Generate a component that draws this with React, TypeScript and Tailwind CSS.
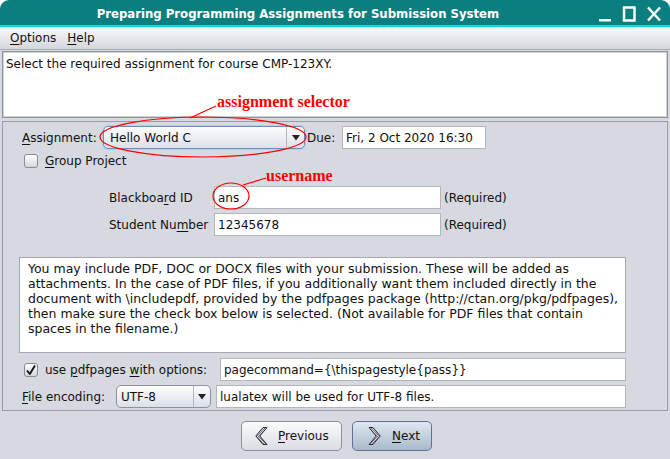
import React from "react";

const U = ({ children }: { children: React.ReactNode }) => (
  <span className="underline underline-offset-[2px] decoration-[1px]">{children}</span>
);

const Check = ({ checked }: { checked?: boolean }) => (
  <div className="w-[14px] h-[14px] rounded-[3px] border border-[#868b94] bg-gradient-to-b from-[#ffffff] to-[#d2d6dd] flex items-center justify-center shrink-0">
    {checked && (
      <svg width="12" height="12" viewBox="0 0 12 12">
        <path d="M2 6.5 L4.8 10 L10 1.5" fill="none" stroke="#1a1a1a" strokeWidth="2" strokeLinejoin="round" />
      </svg>
    )}
  </div>
);

const Field = ({ w, children }: { w: string; children?: React.ReactNode }) => (
  <div className={`${w} h-[23px] bg-white border border-[#b3b6bb] flex items-center pl-[3px] shrink-0 whitespace-nowrap overflow-hidden`}>
    {children}
  </div>
);

const Arrow = () => (
  <svg width="8" height="6" viewBox="0 0 8 6">
    <path d="M0 0 H8 L4 5.5 Z" fill="#222" />
  </svg>
);

const Chevron = ({ right }: { right?: boolean }) => (
  <svg width="13" height="18" viewBox="0 0 13 18" style={{ transform: right ? "scaleX(-1)" : undefined }}>
    <defs>
      <pattern id={right ? "chk2" : "chk1"} width="2" height="2" patternUnits="userSpaceOnUse">
        <rect width="2" height="2" fill="#d8d4e4" />
        <rect width="1" height="1" fill="#7d7690" />
        <rect x="1" y="1" width="1" height="1" fill="#7d7690" />
      </pattern>
    </defs>
    <path
      d="M8 0.5 L0.8 9 L8 17.5 L12 17.5 L4.8 9 L12 0.5 Z"
      fill={`url(#${right ? "chk2" : "chk1"})`}
      stroke="#2b2b2b"
      strokeWidth="1"
      strokeLinejoin="miter"
    />
  </svg>
);

export default function App() {
  return (
    <div className="relative w-[670px] h-[459px] overflow-hidden bg-white font-['DejaVu_Sans',sans-serif] text-[12px] text-[#111]">
      {/* Title bar */}
      <div className="h-[25px] bg-[#0b7f80] rounded-t-[9px] flex items-center">
        <div className="flex-1 text-center text-white font-bold text-[11.7px] pt-[5px] whitespace-nowrap">
          Preparing Programming Assignments for Submission System
        </div>
        <div className="w-[74px] h-[25px] shrink-0">
          <svg width="74" height="25" viewBox="0 0 74 25">
            <rect x="3" y="19" width="12" height="2.5" fill="#fff" />
            <rect x="28" y="7.5" width="10.5" height="13" fill="none" stroke="#fff" strokeWidth="2.5" />
            <path d="M52 7.5 L64 20.5 M64 7.5 L52 20.5" stroke="#fff" strokeWidth="2.5" />
          </svg>
        </div>
      </div>
      <div className="h-[2px] bg-[#00e0e0]" />

      <div className="bg-[#d6d9df] h-[432px] flex flex-col">
        {/* Menu */}
        <div className="h-[23px] bg-gradient-to-b from-[#fafbfc] to-[#d3d6dc] border-b border-[#a8abb1] flex items-center pl-[10px] gap-[11px]">
          <span>
            <U>O</U>ptions
          </span>
          <span>
            <U>H</U>elp
          </span>
        </div>

        {/* Message box */}
        <div className="mx-[2px] mt-[1px] h-[67px] bg-white border border-[#8f9297] shadow-[inset_0_0_0_1px_#cfd2d7] px-[3px] pt-[3px]">
          Select the required assignment for course CMP-123XY.
        </div>

        {/* Panel */}
        <div className="mx-[2px] mt-[3px] h-[290px] border border-[#999ca2] pt-[4px] flex flex-col">
          {/* Assignment row */}
          <div className="flex items-center h-[23px]">
            <span className="ml-[19px] w-[81px] shrink-0">
              <U>A</U>ssignment:
            </span>
            <div className="w-[202px] h-[23px] rounded-[5px] border border-[#6f8cbc] shadow-[0_0_0_1px_#b9cde8] bg-gradient-to-b from-[#fdfdfe] to-[#dce1e9] flex items-center shrink-0">
              <span className="flex-1 pl-[6px]">Hello World C</span>
              <div className="w-[18px] h-full border-l border-[#aeb4bd] flex items-center justify-center">
                <Arrow />
              </div>
            </div>
            <span className="ml-[2px] w-[35px] shrink-0">Due:</span>
            <Field w="w-[144px]">Fri, 2 Oct 2020 16:30</Field>
          </div>

          {/* Group project */}
          <div className="flex items-center h-[16px] mt-[4px]">
            <div className="ml-[21px]">
              <Check />
            </div>
            <span className="ml-[7px]">
              <U>G</U>roup Project
            </span>
          </div>

          {/* Blackboard */}
          <div className="flex items-center h-[23px] mt-[17px]">
            <span className="ml-[106px] w-[105px] shrink-0">
              Blackboa<U>r</U>d ID
            </span>
            <Field w="w-[227px]">ans</Field>
            <span className="ml-[3px]">(Required)</span>
          </div>

          {/* Student number */}
          <div className="flex items-center h-[23px] mt-[4px]">
            <span className="ml-[106px] w-[105px] shrink-0">
              Student Nu<U>m</U>ber
            </span>
            <Field w="w-[227px]">12345678</Field>
            <span className="ml-[3px]">(Required)</span>
          </div>

          {/* Info */}
          <div className="ml-[16px] mt-[21px] w-[607px] h-[96px] bg-white border border-[#a6a9ae] pl-[8px] pt-[3px] text-[12.5px] leading-[15px] whitespace-nowrap">
            <div>You may include PDF, DOC or DOCX files with your submission. These will be added as</div>
            <div>attachments. In the case of PDF files, if you additionally want them included directly in the</div>
            <div>document with \includepdf, provided by the pdfpages package (http://ctan.org/pkg/pdfpages),</div>
            <div>then make sure the check box below is selected. (Not available for PDF files that contain</div>
            <div>spaces in the filename.)</div>
          </div>

          {/* pdfpages */}
          <div className="flex items-center h-[23px] mt-[5px]">
            <div className="ml-[21px]">
              <Check checked />
            </div>
            <span className="ml-[7px] w-[175px] shrink-0">
              use <U>p</U>dfpages <U>w</U>ith options:
            </span>
            <Field w="w-[406px]">pagecommand={"{"}\thispagestyle{"{"}pass{"}"}{"}"}</Field>
          </div>

          {/* encoding */}
          <div className="flex items-center h-[23px] mt-[4px]">
            <span className="ml-[19px] w-[94px] shrink-0">
              <U>F</U>ile encoding:
            </span>
            <div className="w-[95px] h-[23px] rounded-[5px] border border-[#8c929c] bg-gradient-to-b from-[#fdfdfe] to-[#dce0e7] flex items-center shrink-0">
              <span className="flex-1 pl-[4px]">UTF-8</span>
              <div className="w-[17px] h-full border-l border-[#aeb4bd] flex items-center justify-center">
                <Arrow />
              </div>
            </div>
            <div className="ml-[5px]">
              <Field w="w-[410px]">lualatex will be used for UTF-8 files.</Field>
            </div>
          </div>
        </div>

        {/* Buttons */}
        <div className="flex justify-center gap-[10px] mt-[10px] pl-[3px]">
          <div className="w-[101px] h-[30px] rounded-[5px] border border-[#8b9099] bg-gradient-to-b from-[#fbfbfc] to-[#dadde3] flex items-center pl-[13px]">
            <Chevron />
            <span className="ml-[10px]">
              <U>P</U>revious
            </span>
          </div>
          <div className="w-[80px] h-[30px] rounded-[5px] border border-[#5f7391] bg-gradient-to-b from-[#dfe7f0] to-[#a9b9cc] flex items-center pl-[15px]">
            <Chevron right />
            <span className="ml-[11px]">
              <U>N</U>ext
            </span>
          </div>
        </div>
      </div>

      {/* Annotations */}
      <svg className="absolute left-0 top-0 pointer-events-none" width="670" height="459" viewBox="0 0 670 459">
        <ellipse cx="203" cy="137" rx="103" ry="20" fill="none" stroke="#f00" strokeWidth="1.2" />
        <line x1="190" y1="118" x2="216" y2="106" stroke="#f00" strokeWidth="1.2" />
        <text x="217" y="107" fill="#f00" fontFamily="'Liberation Serif', serif" fontWeight="bold" fontSize="16">
          assignment selector
        </text>
        <ellipse cx="231" cy="196" rx="18" ry="13" fill="none" stroke="#f00" strokeWidth="1.2" />
        <line x1="243" y1="185" x2="266" y2="178" stroke="#f00" strokeWidth="1.2" />
        <text x="266" y="181" fill="#f00" fontFamily="'Liberation Serif', serif" fontWeight="bold" fontSize="16">
          username
        </text>
      </svg>
    </div>
  );
}
